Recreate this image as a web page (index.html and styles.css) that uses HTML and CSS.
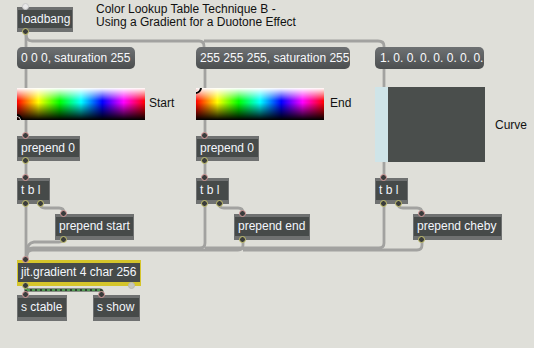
FILE: index.html
```html
<!DOCTYPE html>
<html>
<head>
<meta charset="utf-8">
<link rel="stylesheet" href="styles.css">
</head>
<body>
<div class="patcher">
  <svg class="wires" width="534" height="348" viewBox="0 0 534 348">
    <g class="cord">
      <path d="M26 32 V47"/>
      <path d="M26 34 Q26 41 32 41 H199 Q204 41 204 46 V47"/>
      <path d="M204 41 H378 Q384 41 384 46 V47"/>
      <path d="M26 68 V88"/>
      <path d="M26 120 V136"/>
      <path d="M26 161 V178"/>
      <path d="M205 68 V88"/>
      <path d="M205 120 V136"/>
      <path d="M205 161 V178"/>
      <path d="M384 69 V87"/>
      <path d="M384 162 V178"/>
      <path d="M40 204 Q40 208 45 208 H59 Q64 208 64 213"/>
      <path d="M219 204 Q219 208 224 208 H238 Q243 208 243 213"/>
      <path d="M398 204 Q398 208 403 208 H417 Q422 208 422 213"/>
      <path d="M26 204 V260"/>
      <path d="M64 239 Q64 242 59 242 H34 Q27 243 27 252 V260"/>
      <path d="M205 204 V243 Q205 248 200 248 H33 Q27 248 27 254"/>
      <path d="M243 240 V245 Q243 250 238 250 H33 Q27 250 27 255"/>
      <path d="M384 204 V243 Q384 248 379 248 H205"/>
      <path d="M422 240 V245 Q422 250 417 250 H243"/>
    </g>
    <g class="mcord">
      <path d="M26 287 V295"/>
      <path d="M27 290 H100 Q102 290 102 292 V295"/>
    </g>
    <g class="mdash">
      <path d="M26 287 V295"/>
      <path d="M27 290 H100 Q102 290 102 292 V295"/>
    </g>
  </svg>

  <div class="comment title">Color Lookup Table Technique B -<br>Using a Gradient for a Duotone Effect</div>

  <div class="obj loadbang"><span class="in light"></span>loadbang<span class="out"></span></div>

  <div class="msg m1">0 0 0, saturation 255</div>
  <div class="msg m2">255 255 255, saturation 255</div>
  <div class="msg m3">1. 0. 0. 0. 0. 0. 0. 0.</div>

  <div class="swatch s1"><span class="mark mark-bl"></span></div>
  <div class="comment lab-start">Start</div>
  <div class="swatch s2"><span class="mark mark-tl"></span></div>
  <div class="comment lab-end">End</div>

  <div class="curve"><div class="curve-strip"></div><div class="curve-body"></div></div>
  <div class="comment lab-curve">Curve</div>

  <div class="obj p0a"><span class="in"></span>prepend 0<span class="out"></span></div>
  <div class="obj p0b"><span class="in"></span>prepend 0<span class="out"></span></div>

  <div class="obj tbl t1"><span class="in"></span>t b l<span class="out"></span><span class="out r"></span></div>
  <div class="obj tbl t2"><span class="in"></span>t b l<span class="out"></span><span class="out r"></span></div>
  <div class="obj tbl t3"><span class="in"></span>t b l<span class="out"></span><span class="out r"></span></div>

  <div class="obj ps"><span class="in"></span>prepend start<span class="out"></span></div>
  <div class="obj pe"><span class="in"></span>prepend end<span class="out"></span></div>
  <div class="obj pc"><span class="in"></span>prepend cheby<span class="out"></span></div>

  <div class="obj sel jg"><span class="in"></span>jit.gradient 4 char 256<span class="out"></span><span class="out r grey"></span></div>

  <div class="obj sct"><span class="in"></span>s ctable</div>
  <div class="obj ssh"><span class="in"></span>s show</div>
</div>
</body>
</html>
```

FILE: styles.css
```css
html, body {
  margin: 0;
  padding: 0;
  background: #dfdfd9;
}

.patcher {
  position: relative;
  width: 534px;
  height: 348px;
  overflow: hidden;
  background: #dfdfd9;
  font-family: "Liberation Sans", Arial, sans-serif;
  font-size: 12px;
}

.wires {
  position: absolute;
  left: 0;
  top: 0;
}

.cord path {
  fill: none;
  stroke: #a2a2a0;
  stroke-width: 2.8;
}

.mcord path {
  fill: none;
  stroke: #2f3f30;
  stroke-width: 3;
}

.mdash path {
  fill: none;
  stroke: #5cb85c;
  stroke-width: 1.4;
  stroke-dasharray: 3 2;
}

.comment {
  position: absolute;
  color: #111;
  line-height: 13px;
  white-space: nowrap;
}

.title { left: 96px; top: 3px; }
.lab-start { left: 149px; top: 97px; }
.lab-end { left: 330px; top: 97px; }
.lab-curve { left: 495px; top: 119px; }

/* object boxes */
.obj {
  position: absolute;
  box-sizing: border-box;
  height: 26px;
  border-style: solid;
  border-color: #6f7171;
  border-width: 3px 1px 4px;
  background: #464a49;
  color: #f3f6fc;
  line-height: 19px;
  padding-left: 3px;
  white-space: nowrap;
}

.obj.sel { border-color: #d5c52b; }

.in, .out {
  position: absolute;
  left: 4px;
  width: 7px;
  height: 7px;
  box-sizing: border-box;
  border-radius: 50%;
  background: #3a3c3c;
}

.in {
  top: -7px;
  border: 1px solid #d99c9c;
}

.in.light {
  border-color: #c8c8c8;
  background: #e8e8e8;
}

.out {
  bottom: -7px;
  border: 1px solid #c8c56f;
}

.out.r { left: auto; right: 5px; }

.out.grey {
  border-color: #b8b8b0;
  background: #c6c6be;
}

.loadbang { left: 17px; top: 7px; width: 56px; height: 25px; line-height: 18px; }
.p0a { left: 17px; top: 136px; width: 63px; height: 25px; line-height: 18px; }
.p0b { left: 196px; top: 136px; width: 63px; height: 25px; line-height: 18px; }

.tbl { top: 178px; width: 33px; }
.t1 { left: 17px; }
.t2 { left: 196px; }
.t3 { left: 375px; }

.ps { left: 55px; top: 214px; width: 79px; }
.pe { left: 234px; top: 214px; width: 76px; }
.pc { left: 413px; top: 214px; width: 89px; }

.jg { left: 17px; top: 260px; width: 124px; }
.sct { left: 17px; top: 295px; width: 50px; }
.ssh { left: 93px; top: 295px; width: 47px; }

/* message boxes */
.msg {
  position: absolute;
  top: 47px;
  height: 22px;
  box-sizing: border-box;
  border-radius: 5px;
  background: linear-gradient(#6e7173, #4b4e4f);
  color: #f8f9fc;
  line-height: 22px;
  padding-left: 4px;
  white-space: nowrap;
}

.m1 { left: 17px; width: 118px; }
.m2 { left: 196px; width: 154px; }
.m3 { left: 375px; width: 109px; padding-left: 5px; }

/* swatches */
.swatch {
  position: absolute;
  top: 88px;
  width: 128px;
  height: 32px;
  overflow: hidden;
  background:
    linear-gradient(to bottom, rgba(255,255,255,1) 0%, rgba(255,255,255,0) 40%, rgba(0,0,0,0) 46%, rgba(0,0,0,1) 100%),
    linear-gradient(to right, #ff0000 0%, #ffff00 16.67%, #00ff00 33.33%, #00ffff 50%, #0000ff 66.67%, #ff00ff 83.33%, #ff0000 100%);
}

.s1 { left: 17px; }
.s2 { left: 196px; }

.mark {
  position: absolute;
  width: 13px;
  height: 13px;
  box-sizing: border-box;
  border-radius: 50%;
  border: 2px solid #000;
  box-shadow: inset 0 0 0 1px #fff;
}

.mark-bl { left: -7px; bottom: -7px; }
.mark-tl { left: -7px; top: -7px; }

/* curve display */
.curve {
  position: absolute;
  left: 375px;
  top: 87px;
  width: 110px;
  height: 75px;
  display: flex;
}

.curve-strip {
  width: 13px;
  background: #cfe4e8;
}

.curve-body {
  flex: 1;
  background: #4a4e4c;
}
```
